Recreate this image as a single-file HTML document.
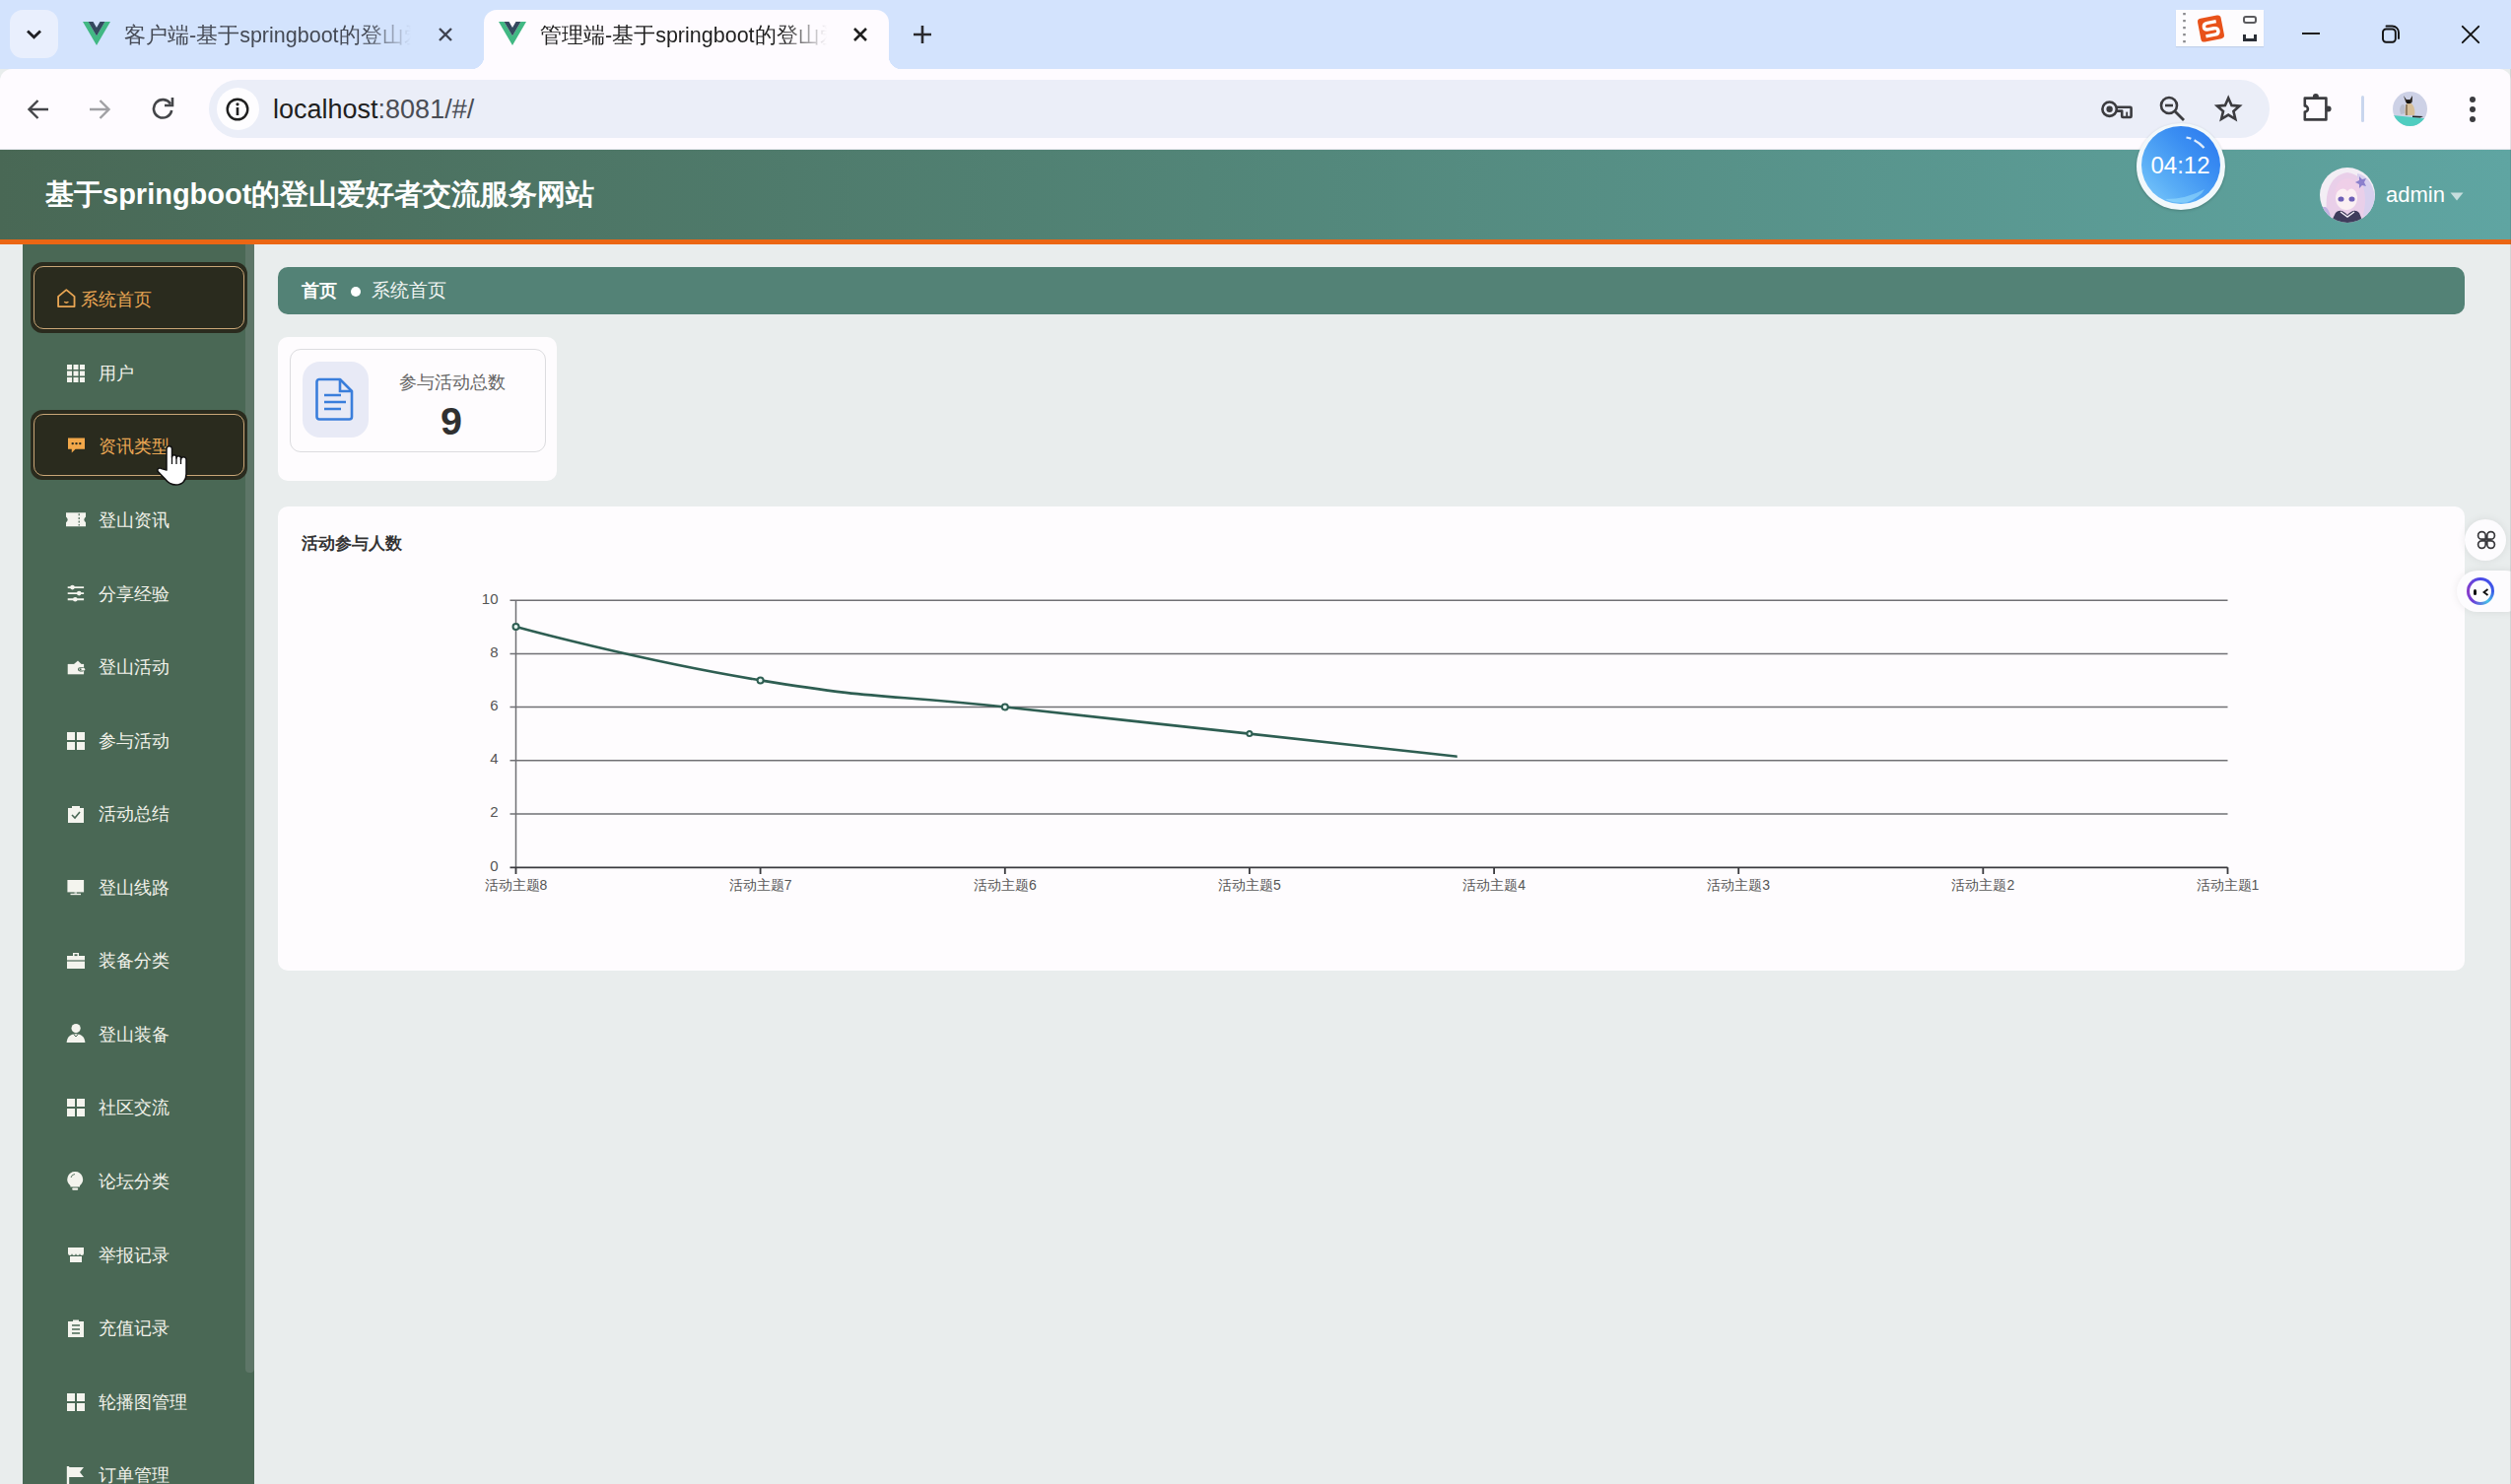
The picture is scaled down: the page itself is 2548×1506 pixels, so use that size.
<!DOCTYPE html>
<html><head><meta charset="utf-8">
<style>
*{margin:0;padding:0;box-sizing:border-box}
html,body{width:2548px;height:1506px;overflow:hidden;font-family:"Liberation Sans",sans-serif;background:#e9eded;position:relative}
.a{position:absolute}
#tabbar{left:0;top:0;width:2548px;height:70px;background:#d3e3fd}
#toolbar{left:0;top:70px;width:2548px;height:82px;background:#fefbff;border-radius:12px 12px 0 0;border-bottom:1px solid #e4e6ec}
#header{left:0;top:152px;width:2548px;height:91px;background:linear-gradient(90deg,#496855 0%,#528578 48%,#5fa5a2 100%)}
#orange{left:0;top:242.8px;width:2548px;height:5.2px;background:#eb6614}
#side{left:23px;top:248px;width:235px;height:1258px;background:#4a6855;overflow:hidden}
.thumb{left:226px;top:0;width:9px;height:1145px;background:#5e7668;border-radius:0 0 4px 4px}
.mi{left:0;width:226px;height:72px;color:#f2f2ea;font-size:18px;line-height:72px}
.mi .ic{position:absolute;left:45px;top:27px;width:18px;height:18px;overflow:visible}
.mi .tx{position:absolute;left:77px;top:0;white-space:nowrap}
.act{left:7.5px;width:220.5px;height:71.2px;background:#2a2b1e;border-radius:12px}
.on{color:#e9a654}
.act:after{content:"";position:absolute;left:3.5px;top:4px;right:3.5px;bottom:4px;border:1.6px solid #c9a677;border-radius:10px}
.tabtxt{font-size:21.5px;color:#3c3c3c;white-space:nowrap;overflow:hidden}
</style></head><body>
<!-- ================= TAB BAR ================= -->
<div id="tabbar" class="a">
  <div class="a" style="left:10px;top:10px;width:49px;height:49px;border-radius:13px;background:#e9effd"></div>
  <svg class="a" style="left:26px;top:28.5px" width="17" height="12" viewBox="0 0 17 12"><path d="M2 2.5 L8.5 8.8 L15 2.5" fill="none" stroke="#1f1f24" stroke-width="2.8"/></svg>
  <!-- inactive tab -->
  <svg class="a" style="left:84px;top:22px" width="28" height="24" viewBox="0 0 28 24"><path d="M0 0h5.5L14 14.6 22.5 0H28L14 24z" fill="#41b883"/><path d="M5.5 0h5L14 6 17.5 0h5L14 14.6z" fill="#34495e"/></svg>
  <div class="a tabtxt" style="left:126px;top:21.2px;width:300px;height:30px;line-height:30px;color:#454a55;-webkit-mask-image:linear-gradient(90deg,#000 82%,transparent 97%)">客户端-基于springboot的登山爱好者</div>
  <svg class="a" style="left:444px;top:27px" width="16" height="16" viewBox="0 0 16 16"><path d="M2 2L14 14M14 2L2 14" stroke="#3f4350" stroke-width="2.4"/></svg>
  <!-- active tab -->
  <div class="a" style="left:491px;top:10px;width:411px;height:60px;background:#fefbff;border-radius:13px 13px 0 0"></div>
  <div class="a" style="left:478px;top:57px;width:13px;height:13px;background:radial-gradient(circle at 0 0,transparent 13px,#fefbff 13.5px)"></div>
  <div class="a" style="left:902px;top:57px;width:13px;height:13px;background:radial-gradient(circle at 100% 0,transparent 13px,#fefbff 13.5px)"></div>
  <svg class="a" style="left:506px;top:22px" width="28" height="24" viewBox="0 0 28 24"><path d="M0 0h5.5L14 14.6 22.5 0H28L14 24z" fill="#41b883"/><path d="M5.5 0h5L14 6 17.5 0h5L14 14.6z" fill="#34495e"/></svg>
  <div class="a tabtxt" style="left:548px;top:21.2px;width:300px;height:30px;line-height:30px;color:#1f1f1f;-webkit-mask-image:linear-gradient(90deg,#000 82%,transparent 97%)">管理端-基于springboot的登山爱好者</div>
  <svg class="a" style="left:865px;top:27px" width="16" height="16" viewBox="0 0 16 16"><path d="M2 2L14 14M14 2L2 14" stroke="#1f1f1f" stroke-width="2.6"/></svg>
  <svg class="a" style="left:926px;top:25px" width="20" height="20" viewBox="0 0 20 20"><path d="M10 1V19M1 10H19" stroke="#2a2a2e" stroke-width="2.6"/></svg>
  <!-- IME widget -->
  <div class="a" style="left:2208px;top:10px;width:89px;height:37px;background:#fdfcfe;box-shadow:0 1px 1px rgba(0,0,0,.08)"></div>
  <svg class="a" style="left:2214px;top:12px" width="6" height="34" viewBox="0 0 6 34"><path d="M2.5 1V3.2M2.5 8V10.2M2.5 15V17.2M2.5 22V24.2M2.5 29V31.2" stroke="#8a8a8e" stroke-width="2.6"/></svg>
  <svg class="a" style="left:2228px;top:14px" width="31" height="30" viewBox="0 0 31 30"><g transform="rotate(-11 15.5 15)"><rect x="3.5" y="3" width="24" height="24" rx="3.5" fill="#e8521a"/><path d="M22 8.8 H13 Q8.8 8.8 8.8 12.3 Q8.8 15.3 12.6 15.3 H18.4 Q22.4 15.3 22.4 18.6 Q22.4 21.8 18.2 21.8 H9" fill="none" stroke="#fff" stroke-width="3.4"/></g></svg>
  <div class="a" style="left:2275.5px;top:15.5px;width:14px;height:8px;border:2px solid #5a5a5e;border-radius:3px"></div>
  <div class="a" style="left:2275.5px;top:34.5px;width:14px;height:7px;border:3px solid #2a2e36;border-top:none"></div>
  <!-- window controls -->
  <div class="a" style="left:2336px;top:33px;width:18px;height:2px;background:#1f1f1f"></div>
  <svg class="a" style="left:2415px;top:24px" width="22" height="22" viewBox="0 0 22 22"><rect x="3" y="5.5" width="12.8" height="13.2" rx="3.2" fill="none" stroke="#111" stroke-width="1.9"/><path d="M6.5 2.5H12.5A6.5 6.5 0 0 1 19 9V15" fill="none" stroke="#111" stroke-width="1.9" stroke-linecap="round"/></svg>
  <svg class="a" style="left:2497px;top:24.5px" width="20" height="20" viewBox="0 0 20 20"><path d="M1.8 1.8L18.2 18.2M18.2 1.8L1.8 18.2" stroke="#111" stroke-width="1.9" stroke-linecap="round"/></svg>
</div>
<!-- ================= TOOLBAR ================= -->
<div id="toolbar" class="a">
  <svg class="a" style="left:27px;top:30px" width="23" height="22" viewBox="0 0 23 22"><path d="M22 11H3M11.5 2L2.5 11L11.5 20" fill="none" stroke="#444549" stroke-width="2.4"/></svg>
  <svg class="a" style="left:90px;top:30px" width="23" height="22" viewBox="0 0 23 22"><path d="M1 11H20M11.5 2L20.5 11L11.5 20" fill="none" stroke="#a0a0a4" stroke-width="2.4"/></svg>
  <svg class="a" style="left:153px;top:28px" width="25" height="24" viewBox="0 0 25 24"><path d="M20 7.5A9.2 9.2 0 1 0 21.2 14" fill="none" stroke="#444549" stroke-width="2.6"/><path d="M14 9H22V1" fill="none" stroke="#444549" stroke-width="2.6"/></svg>
  <div class="a" style="left:212px;top:11px;width:2091px;height:59px;border-radius:30px;background:#ebeef8"></div>
  <div class="a" style="left:220px;top:19px;width:43px;height:43px;border-radius:50%;background:#fefdff"></div>
  <svg class="a" style="left:229px;top:29px" width="24" height="24" viewBox="0 0 24 24"><circle cx="12" cy="12" r="10.3" fill="none" stroke="#1f1f1f" stroke-width="2.4"/><rect x="10.7" y="10" width="2.6" height="8" fill="#1f1f1f"/><circle cx="12" cy="6.8" r="1.6" fill="#1f1f1f"/></svg>
  <div class="a" style="left:277px;top:22px;height:38px;line-height:38px;font-size:27px;color:#1f1f1f;white-space:nowrap">localhost<span style="color:#4a4d55">:8081/#/</span></div>
  <!-- key -->
  <svg class="a" style="left:2131px;top:31px" width="34" height="22" viewBox="0 0 34 22"><circle cx="9.6" cy="9.7" r="7.2" fill="none" stroke="#3c3c40" stroke-width="2.6"/><circle cx="9.6" cy="9.7" r="3.2" fill="#3c3c40"/><path d="M16.6 7.8H30.6A1 1 0 0 1 31.6 8.8V17A1 1 0 0 1 30.6 18H23.2A1 1 0 0 1 22.2 17V11.6H16.6" fill="none" stroke="#3c3c40" stroke-width="2.6" stroke-linejoin="round"/><path d="M27.2 12.6V17" stroke="#3c3c40" stroke-width="1.8"/></svg>
  <!-- zoom out -->
  <svg class="a" style="left:2191px;top:27px" width="27" height="26" viewBox="0 0 27 26"><circle cx="10" cy="10" r="8" fill="none" stroke="#3c3c40" stroke-width="2.6"/><path d="M6 10H14" stroke="#3c3c40" stroke-width="2.6"/><path d="M16 16L25 25" stroke="#3c3c40" stroke-width="2.8"/></svg>
  <!-- star -->
  <svg class="a" style="left:2246px;top:26px" width="30" height="28" viewBox="0 0 30 28"><path d="M15.2 3.4L18.5 10.9L26.5 11.6L20.4 16.9L22.3 24.8L15.2 20.6L8.1 24.8L10 16.9L3.9 11.6L11.9 10.9Z" fill="none" stroke="#3c3c40" stroke-width="2.6" stroke-linejoin="miter"/></svg>
  <!-- puzzle -->
  <svg class="a" style="left:2336px;top:23px" width="32" height="32" viewBox="0 0 32 32"><path d="M2.8,6.6 H24.4 V28.4 H2.8 V20.6 A3.1,3.1 0 0 0 2.8,14.4 Z" fill="none" stroke="#3c3c40" stroke-width="2.6" stroke-linejoin="round"/><circle cx="13.9" cy="4.9" r="3" fill="#3c3c40"/><circle cx="26.6" cy="17.4" r="3" fill="#3c3c40"/></svg>
  <div class="a" style="left:2396px;top:27px;width:3px;height:27px;background:#c9d6ee;border-radius:2px"></div>
  <!-- profile avatar -->
  <svg class="a" style="left:2428px;top:23px" width="35" height="35" viewBox="0 0 35 35"><defs><clipPath id="pc"><circle cx="17.5" cy="17.5" r="17.5"/></clipPath></defs><g clip-path="url(#pc)">
  <rect width="35" height="35" fill="#cdd1e6"/>
  <path d="M0 24 L35 27.5 V35 H0Z" fill="#50cdc0"/>
  <path d="M7 18 C8 13 10 12 12 14 L13 22 L8 23Z" fill="#b8bccc"/>
  <path d="M12.5 24 C12 18 13 14 14 12 H19 C22 15 23 20 22 24Z" fill="#d6be98"/>
  <path d="M11 4 L13.8 8 H17.5 L20 4 L19.8 10 C19 13 14 13 13 10Z" fill="#2e2824"/>
  <ellipse cx="15.8" cy="10.5" rx="2" ry="1.5" fill="#111"/>
  <path d="M14 13 V24" stroke="#4a3a2a" stroke-width="1"/>
  <path d="M20 24.5 L31 25 L28 26.5 L20 26Z" fill="#222"/>
  </g></svg>
  <!-- menu dots -->
  <div class="a" style="left:2506px;top:28px;width:6px;height:6px;border-radius:50%;background:#3c3c40"></div>
  <div class="a" style="left:2506px;top:38px;width:6px;height:6px;border-radius:50%;background:#3c3c40"></div>
  <div class="a" style="left:2506px;top:48px;width:6px;height:6px;border-radius:50%;background:#3c3c40"></div>
</div>
<!-- ================= HEADER ================= -->
<div id="header" class="a">
  <div class="a" style="left:46px;top:25px;font-size:29px;font-weight:bold;color:#fff;white-space:nowrap;line-height:40px">基于springboot的登山爱好者交流服务网站</div>
  <!-- user -->
  <svg class="a" style="left:2353.5px;top:18px" width="56" height="56" viewBox="0 0 56 56"><defs><clipPath id="avc"><circle cx="28" cy="28" r="28"/></clipPath></defs><g clip-path="url(#avc)">
  <rect width="56" height="56" fill="#f3eef5"/>
  <path d="M8 52 C4 30 8 8 28 5 C48 8 52 30 48 52 Z" fill="#e9cfe9"/>
  <path d="M38 10 C46 16 48 34 44 48 L52 56 L56 30 C54 16 48 8 38 6Z" fill="#d8d0ee"/>
  <ellipse cx="27" cy="31" rx="11" ry="12" fill="#fbeff3"/>
  <path d="M15 28 C16 16 22 11 28 11 C35 11 40 17 40 28 C36 22 32 19 28 24 C24 19 19 22 15 28Z" fill="#efcfe8"/>
  <ellipse cx="21.5" cy="32" rx="3" ry="2.6" fill="#6d5fb6"/><ellipse cx="32.5" cy="32" rx="3" ry="2.6" fill="#6d5fb6"/>
  <path d="M40 9 L43 12 L47 11 L45 15 L47 19 L43 18 L40 21 L40 17 L36 15 L40 13Z" fill="#8c80cc"/>
  <path d="M6 40 C10 44 12 50 10 56 H0 V40Z" fill="#c2b2e2"/>
  <path d="M11 56 L16 46 C20 42 24 44 28 48 C32 44 36 42 40 46 L44 56Z" fill="#3f3c5c"/>
  <path d="M21 45 L28 50 L35 45" fill="none" stroke="#f0ecf4" stroke-width="1.5"/>
  </g></svg>
  <div class="a" style="left:2421px;top:29px;font-size:22px;color:#fff;line-height:34px">admin</div>
  <svg class="a" style="left:2485.5px;top:43px" width="14" height="9" viewBox="0 0 14 9"><path d="M0.5 0.5H13.5L7 8.5Z" fill="#c6dede"/></svg>
</div>
<div id="orange" class="a"></div>
<!-- timer bubble -->
<div class="a" style="left:2168px;top:124.5px;width:89.5px;height:88px;border-radius:50%;background:#f2f8fb;box-shadow:0 1px 3px rgba(0,0,0,.2)"></div>
<div class="a" style="left:2173px;top:127.6px;width:79.5px;height:79px;border-radius:50%;background:linear-gradient(225deg,#2a76ee 0%,#3a8ef2 35%,#5aaef6 70%,#80ccfb 100%)"></div>
<svg class="a" style="left:2173px;top:127.6px" width="80" height="79" viewBox="0 0 80 79"><path d="M45.5 11.5 Q56 13.5 63.5 22" fill="none" stroke="rgba(255,255,255,.85)" stroke-width="2.2" stroke-dasharray="5 3.5 30"/><path d="M24 74 Q46 74 64 64 Q60 72 46 77.5 Q34 79 24 74Z" fill="rgba(170,235,255,.45)"/></svg>
<div class="a" style="left:2172px;top:150.5px;width:81px;text-align:center;font-size:24px;color:#fff;line-height:34px">04:12</div>
<!-- ================= SIDEBAR ================= -->
<div id="side" class="a">
  <div class="a thumb"></div>
  <div class="a act" style="top:18.4px"></div><div class="a mi on" style="top:20.32px"><svg class="a" style="left:33.5px;top:24.5px" width="21" height="21" viewBox="0 0 21 23"><path d="M10.3 1.2L19.3 8.6V19.8H1.3V8.6Z" fill="none" stroke="#e9a654" stroke-width="2" stroke-linejoin="round"/><path d="M8 14.5Q10.3 16.5 12.6 14.5" fill="none" stroke="#e9a654" stroke-width="1.7"/></svg><span class="tx" style="left:58.5px">系统首页</span></div>
  <div class="a mi" style="top:94.88px"><svg class="ic" viewBox="0 0 18 18"><path d="M0 0h5v5H0zM6.5 0h5v5h-5zM13 0h5v5h-5zM0 6.5h5v5H0zM6.5 6.5h5v5h-5zM13 6.5h5v5h-5zM0 13h5v5H0zM6.5 13h5v5h-5zM13 13h5v5h-5z" fill="#f4f4ee"/></svg><span class="tx">用户</span></div>
  <div class="a act" style="top:167.6px"></div><div class="a mi on" style="top:169.44px"><svg class="a" style="left:45.5px;top:25.5px" width="17" height="18" viewBox="0 0 18 18"><path d="M0 1H18V13H8L4 17V13H0Z" fill="#f3a84a"/><circle cx="5" cy="7" r="1.3" fill="#2a2b1e"/><circle cx="9" cy="7" r="1.3" fill="#2a2b1e"/><circle cx="13" cy="7" r="1.3" fill="#2a2b1e"/></svg><span class="tx" style="left:77px">资讯类型</span></div>
  <div class="a mi" style="top:244.00px"><svg class="ic" viewBox="0 0 18 18"><path d="M-1 1.3H19V5.4Q15.6 8.3 19 11.2V15.3H-1V11.2Q2.4 8.3 -1 5.4Z" fill="#f4f4ee"/><path d="M12.2 2.3V14.5" stroke="#4a6855" stroke-width="1.2" stroke-dasharray="2 1.6"/></svg><span class="tx">登山资讯</span></div>
  <div class="a mi" style="top:318.56px"><svg class="ic" viewBox="0 0 18 18"><path d="M0.7 2.1H17.1M0.7 8.1H17.1M0.7 14.2H17.1" stroke="#f4f4ee" stroke-width="1.9"/><circle cx="5.5" cy="2.1" r="2.3" fill="#f4f4ee"/><circle cx="12.2" cy="8.1" r="2.3" fill="#f4f4ee"/><circle cx="8.3" cy="14.2" r="2.3" fill="#f4f4ee"/></svg><span class="tx">分享经验</span></div>
  <div class="a mi" style="top:393.12px"><svg class="ic" viewBox="0 0 18 18"><path d="M0.7 5.9H17.1V16.3H0.7Z" fill="#f4f4ee"/><path d="M7 5.9L11 2.6L14.6 5.9Z" fill="#f4f4ee"/><rect x="11" y="9.2" width="7" height="4.2" rx="2.1" fill="#4a6855"/><rect x="12.2" y="10.1" width="6" height="2.4" rx="1.2" fill="#f4f4ee"/><circle cx="13.6" cy="11.3" r="1" fill="#4a6855"/></svg><span class="tx">登山活动</span></div>
  <div class="a mi" style="top:467.68px"><svg class="ic" viewBox="0 0 18 18"><path d="M0 0h8v8H0zM10 0h8v8h-8zM0 10h8v8H0zM10 10h8v8h-8z" fill="#f4f4ee"/></svg><span class="tx">参与活动</span></div>
  <div class="a mi" style="top:542.24px"><svg class="ic" viewBox="0 0 18 18"><path d="M1 3H5V1H13V3H17V18H1Z" fill="#f4f4ee"/><path d="M5 10L8 13L13 7" fill="none" stroke="#4a6855" stroke-width="1.6"/></svg><span class="tx">活动总结</span></div>
  <div class="a mi" style="top:616.80px"><svg class="ic" viewBox="0 0 18 18"><path d="M0.4 1H17.1V13.4H0.4Z" fill="#f4f4ee"/><path d="M7.5 13.4H10V14.6H7.5Z" fill="#f4f4ee"/><path d="M3.5 14.8H14V16.2H3.5Z" fill="#f4f4ee"/></svg><span class="tx">登山线路</span></div>
  <div class="a mi" style="top:691.36px"><svg class="ic" viewBox="0 0 18 18"><path d="M6 1H12V4H18V17H0V4H6Z" fill="#f4f4ee"/><path d="M0 9H18" stroke="#4a6855" stroke-width="1.2"/><rect x="7.5" y="2.3" width="3" height="1.8" fill="#4a6855"/></svg><span class="tx">装备分类</span></div>
  <div class="a mi" style="top:765.92px"><svg class="ic" viewBox="0 0 18 18"><circle cx="9.1" cy="2.6" r="4.6" fill="#f4f4ee"/><path d="M-0.4 16.9C0.2 11 3.5 8.2 9 8.2S17.8 11 18.4 16.9Z" fill="#f4f4ee"/><path d="M6.8 8.6L9 11L11.2 8.6" fill="none" stroke="#4a6855" stroke-width="1"/></svg><span class="tx">登山装备</span></div>
  <div class="a mi" style="top:840.48px"><svg class="ic" viewBox="0 0 18 18"><path d="M0 0h8v8H0zM10 0h8v8h-8zM0 10h8v8H0zM10 10h8v8h-8z" fill="#f4f4ee"/></svg><span class="tx">社区交流</span></div>
  <div class="a mi" style="top:915.04px"><svg class="ic" viewBox="0 0 18 18"><path d="M8.2 -1.1A8 8 0 0 1 13 13.2V14.4H3.4V13.2A8 8 0 0 1 8.2 -1.1Z" fill="#f4f4ee"/><rect x="5.2" y="15.6" width="6" height="2.2" rx="1" fill="#f4f4ee"/><path d="M4 5A4.5 4.5 0 0 1 8 1.5" fill="none" stroke="#4a6855" stroke-width="0.9"/></svg><span class="tx">论坛分类</span></div>
  <div class="a mi" style="top:989.60px"><svg class="ic" viewBox="0 0 18 18"><path d="M1 1H17V7Q17 9 15 9Q13 9 13 7Q13 9 11 9Q9 9 9 7Q9 9 7 9Q5 9 5 7Q5 9 3 9Q1 9 1 7Z" fill="#f4f4ee"/><path d="M3 10H15V16H3Z" fill="#f4f4ee"/></svg><span class="tx">举报记录</span></div>
  <div class="a mi" style="top:1064.16px"><svg class="ic" viewBox="0 0 18 18"><path d="M1 2H6V0.5H12V2H17V18H1Z" fill="#f4f4ee"/><path d="M5 6H13M5 10H13M5 14H13" stroke="#4a6855" stroke-width="1.4"/></svg><span class="tx">充值记录</span></div>
  <div class="a mi" style="top:1138.72px"><svg class="ic" viewBox="0 0 18 18"><path d="M0 0h8v8H0zM10 0h8v8h-8zM0 10h8v8H0zM10 10h8v8h-8z" fill="#f4f4ee"/></svg><span class="tx">轮播图管理</span></div>
  <div class="a mi" style="top:1213.28px"><svg class="ic" viewBox="0 0 18 18"><path d="M1 0V18" stroke="#f4f4ee" stroke-width="2.4"/><path d="M2 1H17L13 6L17 11H2Z" fill="#f4f4ee"/></svg><span class="tx">订单管理</span></div>
</div>
<!-- cursor -->
<svg class="a" style="left:150px;top:440px" width="50" height="60" viewBox="0 0 50 60"><path d="M19,37 V15.5 A2.75,2.75 0 0 1 24.5,15.5 V24 A2.25,2.25 0 0 1 29,24 V25 A2.25,2.25 0 0 1 33.5,25 V26.5 A2.75,2.75 0 0 1 39,26.5 V41 C39,47.5 35,52 28.5,52 C23,52 20,49.5 17,45.5 L10.5,38.8 A2.2,2.2 0 0 1 13.8,35.6 Z" fill="#fff" stroke="#111" stroke-width="1.5" stroke-linejoin="round"/><path d="M24.5,23.5V31M29,24.5V31M33.5,26V31" stroke="#111" stroke-width="1.3"/></svg>
<!-- ================= CONTENT ================= -->
<div class="a" style="left:282px;top:270.5px;width:2219px;height:48px;border-radius:10px;background:#538276"></div>
<div class="a" style="left:306px;top:279px;font-size:18px;font-weight:bold;color:#fff;line-height:32px">首页</div>
<div class="a" style="left:355.5px;top:291px;width:10px;height:10px;border-radius:50%;background:#fff"></div>
<div class="a" style="left:377px;top:279px;font-size:19px;color:#f0f4f2;line-height:32px">系统首页</div>
<!-- stat card -->
<div class="a" style="left:282px;top:342px;width:283px;height:146.3px;border-radius:10px;background:#fefcfe"></div>
<div class="a" style="left:293.5px;top:354px;width:260px;height:105px;border-radius:11px;border:1.5px solid #dcdcdf;background:#fefcfe"></div>
<div class="a" style="left:307px;top:366.5px;width:67px;height:77px;border-radius:18px;background:#e8eaf6"></div>
<svg class="a" style="left:320px;top:383px" width="40" height="44" viewBox="0 0 40 44"><path d="M4 2H25L37 14V40A2.5 2.5 0 0 1 34.5 42.5H4A2.5 2.5 0 0 1 1.5 40V4.5A2.5 2.5 0 0 1 4 2Z" fill="none" stroke="#3a7edb" stroke-width="2.6" stroke-linejoin="round"/><path d="M25 2V14H37" fill="none" stroke="#3a7edb" stroke-width="2.6"/><path d="M9 18H26M9 25H31M9 32H26" stroke="#3a7edb" stroke-width="2.6"/></svg>
<div class="a" style="left:376px;top:375px;width:166px;text-align:center;font-size:17.5px;color:#666;line-height:26px">参与活动总数</div>
<div class="a" style="left:375px;top:404px;width:166px;text-align:center;font-size:39.5px;font-weight:bold;color:#303030;line-height:46px">9</div>
<!-- chart card -->
<div class="a" style="left:282px;top:513.7px;width:2219.3px;height:471.7px;border-radius:10px;background:#fefcfe"></div>
<div class="a" style="left:306px;top:537px;font-size:16.5px;font-weight:bold;color:#333;line-height:28px">活动参与人数</div>
<svg class="a" style="left:0;top:0" width="2548" height="1506" viewBox="0 0 2548 1506">
  <defs><clipPath id="cl"><rect x="500" y="580" width="978.7" height="320"/></clipPath></defs>
  <g stroke="#707074" stroke-width="1.5">
    <path d="M517.5 609.3H2260.5M517.5 663.5H2260.5M517.5 717.6H2260.5M517.5 771.8H2260.5M517.5 826H2260.5"/>
    <path d="M523.5 609.3V880.3"/>
  </g>
  <g stroke="#3a3a3e" stroke-width="1.8"><path d="M517.5 880.3H2260.5"/>
    <path d="M523.5 880.3V887M771.6 880.3V887M1019.8 880.3V887M1267.9 880.3V887M1516.1 880.3V887M1764.2 880.3V887M2012.3 880.3V887M2260.5 880.3V887"/></g>
  <g font-size="15" fill="#555" text-anchor="end" font-family="Liberation Sans">
    <text x="505.5" y="612.5">10</text><text x="505.5" y="666.7">8</text><text x="505.5" y="720.9">6</text><text x="505.5" y="775.1">4</text><text x="505.5" y="829.3">2</text><text x="505.5" y="883.5">0</text>
  </g>
  <g font-size="14" fill="#555" text-anchor="middle">
    <text x="523.5" y="903">活动主题8</text><text x="771.6" y="903">活动主题7</text><text x="1019.8" y="903">活动主题6</text><text x="1267.9" y="903">活动主题5</text><text x="1516.1" y="903">活动主题4</text><text x="1764.2" y="903">活动主题3</text><text x="2012.3" y="903">活动主题2</text><text x="2260.5" y="903">活动主题1</text>
  </g>
  <path clip-path="url(#cl)" d="M523.5,636.1 C523.5,636.1 646.5,669.9 771.6,690.4 C894.6,710.6 895.7,704.0 1019.8,717.5 C1143.8,731.1 1143.8,731.1 1267.9,744.6 C1392.0,758.2 1392.0,758.2 1516.1,771.8" fill="none" stroke="#2e5e52" stroke-width="2.6"/>
  <g fill="#e6f6f1" stroke="#2e5e52" stroke-width="2"><circle cx="523.5" cy="636.1" r="3"/><circle cx="771.6" cy="690.4" r="3"/><circle cx="1019.8" cy="717.5" r="3"/><circle cx="1267.9" cy="744.6" r="2.5"/></g>
</svg>
<!-- right floating widgets -->
<div class="a" style="left:2501px;top:527px;width:42px;height:42px;border-radius:50%;background:#fdfcfe;box-shadow:0 0 8px rgba(0,0,0,.08)"></div>
<svg class="a" style="left:2512.5px;top:537.5px" width="20" height="20" viewBox="0 0 20 20"><g fill="none" stroke="#3a3a3e" stroke-width="1.7" stroke-linejoin="round"><path d="M9.2 9.2H5.4A3.8 3.8 0 1 1 9.2 5.4Z"/><path d="M10.8 9.2H14.6A3.8 3.8 0 1 0 10.8 5.4Z"/><path d="M9.2 10.8H5.4A3.8 3.8 0 1 0 9.2 14.6Z"/><path d="M10.8 10.8H14.6A3.8 3.8 0 1 1 10.8 14.6Z"/></g></svg>
<div class="a" style="left:2493px;top:579px;width:70px;height:42px;border-radius:21px;background:#fdfcfe;box-shadow:0 0 8px rgba(0,0,0,.08)"></div>
<div class="a" style="left:2503px;top:586px;width:28px;height:28px;border-radius:50%;background:conic-gradient(from 0deg,#4a48e8,#3a5ae8 25%,#48c0e8 40%,#6a40d8 60%,#8a3cc8 75%,#4a48e8)"></div>
<div class="a" style="left:2506px;top:589px;width:22px;height:22px;border-radius:50%;background:#fdfcfe"></div>
<div class="a" style="left:2510px;top:597.5px;width:3.4px;height:6px;border-radius:1.7px;background:#111"></div>
<svg class="a" style="left:2518.5px;top:597px" width="7" height="8" viewBox="0 0 7 8"><path d="M5.5 1L1.5 4L5.5 7" fill="none" stroke="#111" stroke-width="1.9"/></svg>
<div class="a" style="left:2547px;top:70px;width:1px;height:1436px;background:rgba(60,70,70,.14)"></div>
</body></html>
